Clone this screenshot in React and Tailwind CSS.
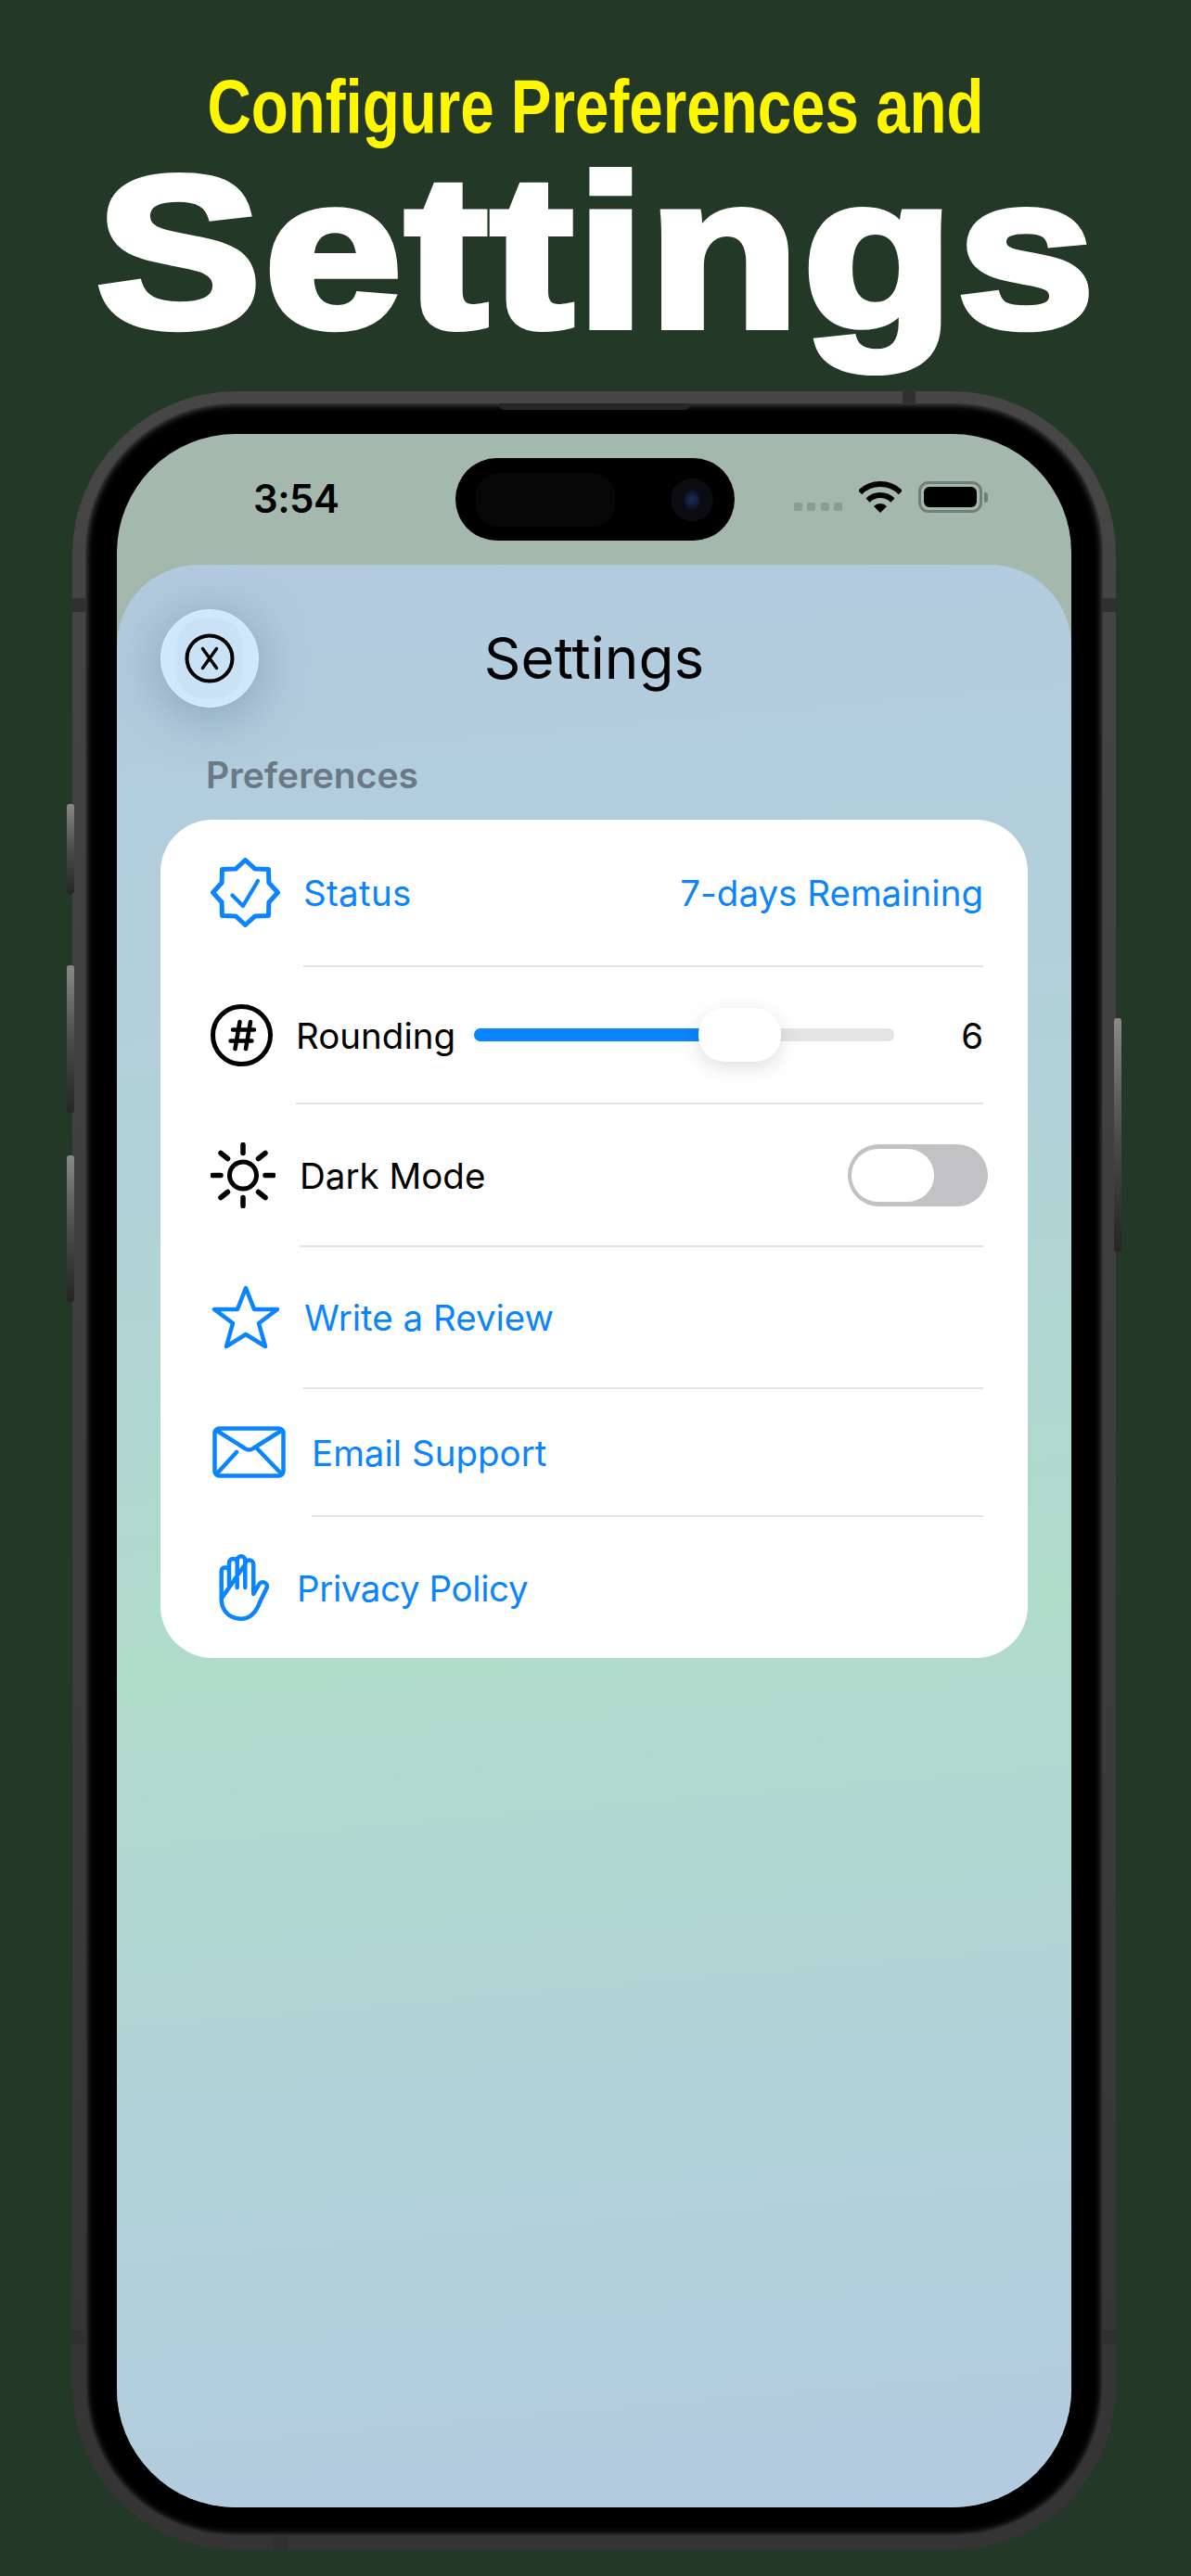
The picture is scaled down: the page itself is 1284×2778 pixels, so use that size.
import React from 'react';

const BLUE = '#0a84ff';

const SealIcon = () => (
    <svg width="75" height="75" viewBox="-37.5 -37.5 75 75" fill="none" stroke={BLUE} strokeWidth="5" strokeLinejoin="round" strokeLinecap="round">
        <polygon points="0,-35 10.5,-25.4 25,-25 25.4,-10.5 35,0 25.4,10.5 25,25 10.5,25.4 0,35 -10.5,25.4 -25,25 -25.4,10.5 -35,0 -25.4,-10.5 -25,-25 -10.5,-25.4" />
        <path d="M-14 3L-2.5 14.5L13.5 -12.5" strokeWidth="4.2" />
    </svg>
);

const HashIcon = () => (
    <svg width="67" height="67" viewBox="0 0 67 67" fill="none" stroke="#000" strokeLinecap="round">
        <circle cx="33.5" cy="33.5" r="31" strokeWidth="5" />
        <path d="M31.5 19L26.5 48M43 19L38 48M24 27.5H47M21.5 39.5H44.5" strokeWidth="4.5" />
    </svg>
);

const SunIcon = () => (
    <svg width="70" height="71" viewBox="-35 -35.5 70 71" fill="none" stroke="#000" strokeLinecap="round">
        <circle cx="0" cy="0" r="14.5" strokeWidth="5" />
        <path d="M0 -33V-24M0 33V24M-33 0H-24M33 0H24M-24 -24L-16.5 -18M24 -24L16.5 -18M-24 24L-16.5 18M24 24L16.5 18" strokeWidth="5.5" />
    </svg>
);

const StarIcon = () => (
    <svg width="74" height="70" viewBox="0 0 74 70" fill="none" stroke={BLUE} strokeWidth="4.5" strokeLinejoin="round">
        <polygon points="37,3 46,26 71,26 51,41 58,66 37,53 16,66 23,41 3,26 28,26" />
    </svg>
);

const MailIcon = () => (
    <svg width="79" height="56" viewBox="0 0 79 56" fill="none" stroke={BLUE} strokeWidth="4.5" strokeLinecap="round">
        <rect x="2.5" y="2.5" width="74" height="51" rx="5" />
        <path d="M5 5L35 24Q39.5 27 44 24L74 5M5 51L26 28M49 25L74 51" />
    </svg>
);

const HandIcon = () => (
    <svg width="54" height="72" viewBox="0 0 54 72" fill="none" stroke={BLUE} strokeWidth="4.5" strokeLinecap="round" strokeLinejoin="round">
        <path d="M2.7 48V18A4.2 4.2 0 0 1 11 18V36M11 18V9.4A4.35 4.35 0 0 1 19.7 9.4V36M19.7 9.4V6.6A4.3 4.3 0 0 1 28.3 6.6V36M28.3 11A4.5 4.5 0 0 1 37.3 11V43L43 33A4.5 4.5 0 0 1 51.5 36.5L44 52C40 63 33 69.7 24 69.7C10 69.7 2.7 60 2.7 48Z" />
    </svg>
);

const CloseIcon = () => (
    <svg width="54" height="54" viewBox="0 0 54 54" fill="none" stroke="#000" strokeLinecap="round">
        <circle cx="27" cy="27" r="24.5" strokeWidth="4" />
        <path d="M19.5 16.5L34.5 37.5M34.5 16.5L19.5 37.5" strokeWidth="3.5" />
    </svg>
);

const WifiIcon = () => (
    <svg width="46" height="34" viewBox="0 0 46 34" fill="none" stroke="#000">
        <path d="M1.1 12.1A31 31 0 0 1 44.9 12.1" strokeWidth="6" />
        <path d="M9.6 20.6A19 19 0 0 1 36.4 20.6" strokeWidth="6" />
        <path d="M23 34L15.9 26.9A10 10 0 0 1 30.1 26.9Z" fill="#000" stroke="none" />
    </svg>
);

const Divider = ({ className }) => <div className={`h-[2px] bg-[#e5e5e7] mr-[48px] ${className}`} />;

// metal band cuts on the phone edge
const Band = ({ className }) => <div className={`absolute bg-[#303030] ${className}`} />;

const SideButton = ({ className }) => (
    <div className={`absolute w-[8px] rounded-[3px] bg-gradient-to-b from-[#8a8a8a] via-[#4c4c4c] to-[#252525] ${className}`} />
);

export default function App() {
    return (
        <div className="w-[1284px] h-[2778px] bg-[#243827] flex flex-col items-center overflow-hidden font-['Inter',sans-serif]">
            {/* Headline */}
            <div className="h-[422px] w-full flex flex-col items-center font-['Liberation_Sans',Arial,sans-serif] font-bold shrink-0">
                <div className="mt-[75px] h-[80px] leading-[80px] text-[65.5px] text-[#fff700] scale-y-[1.25] whitespace-nowrap">Configure Preferences and</div>
                <div className="mt-[-3px] ml-[3px] h-[240px] leading-[240px] text-[232px] text-white scale-x-[1.15] tracking-[3px] [-webkit-text-stroke:8px_#ffffff] whitespace-nowrap">Settings</div>
            </div>

            {/* Phone */}
            <div className="relative mr-[3px] w-[1125px] h-[2328px] shrink-0 rounded-[176px] bg-gradient-to-b from-[#464646] to-[#343434] pt-[13px] pb-[15px] px-[14px]">
                <SideButton className="left-[-6px] top-[445px] h-[97px]" />
                <SideButton className="left-[-6px] top-[619px] h-[159px]" />
                <SideButton className="left-[-6px] top-[824px] h-[158px]" />
                <SideButton className="right-[-6px] top-[676px] h-[252px]" />
                <Band className="left-0 top-[223px] w-[14px] h-[15px]" />
                <Band className="right-0 top-[223px] w-[14px] h-[15px]" />
                <Band className="left-0 top-[2091px] w-[14px] h-[15px]" />
                <Band className="right-0 top-[2091px] w-[14px] h-[15px]" />
                <Band className="left-[895px] top-0 w-[14px] h-[13px]" />
                <Band className="left-[217px] bottom-0 w-[15px] h-[15px]" />
                <div className="absolute left-[460px] top-[13px] w-[206px] h-[7px] bg-[#262626] rounded-b-[6px] z-10" />

                <div className="w-full h-full rounded-[160px] bg-black pt-[33px] pb-[31px] px-[34px] shadow-[inset_0_0_9px_rgba(255,255,255,0.45)]">
                    <div className="w-full h-full rounded-[128px] bg-[#a5b8ae] overflow-hidden flex flex-col">
                        {/* Status bar */}
                        <div className="h-[141px] shrink-0 relative flex items-start pl-[147px] pr-[90px]">
                            <span className="mt-[47px] text-[42px] leading-[46px] font-semibold text-black w-[94px] tracking-[-0.5px] whitespace-nowrap">3:54</span>
                            <div className="mt-[26px] ml-[124px] w-[301px] h-[89px] rounded-full bg-black relative flex items-center">
                                <div className="ml-[22px] w-[150px] h-[58px] rounded-[24px] bg-[#070708]" />
                                <div className="absolute left-[232px] top-[22px] w-[46px] h-[46px] rounded-full bg-[#0b0b12] flex items-center justify-center">
                                    <div className="w-[16px] h-[22px] rounded-full bg-[radial-gradient(circle,#1b2f63_0%,#10182f_55%,#0a0a10_100%)]" />
                                </div>
                            </div>
                            <div className="ml-auto flex items-start">
                                <div className="mt-[74px] flex gap-[5.5px]">
                                    <div className="w-[9px] h-[9px] rounded-[2px] bg-[#8a9d93]" />
                                    <div className="w-[9px] h-[9px] rounded-[2px] bg-[#8a9d93]" />
                                    <div className="w-[9px] h-[9px] rounded-[2px] bg-[#8a9d93]" />
                                    <div className="w-[9px] h-[9px] rounded-[2px] bg-[#8a9d93]" />
                                </div>
                                <div className="mt-[51px] ml-[18px]"><WifiIcon /></div>
                                <div className="mt-[51px] ml-[18px] flex items-center">
                                    <div className="w-[69px] h-[34px] rounded-[11px] border-[3px] border-[#6f8078] p-[3px]">
                                        <div className="w-full h-full rounded-[6px] bg-black" />
                                    </div>
                                    <div className="ml-[2px] w-[4px] h-[11px] rounded-r-[3px] bg-[#6f8078]" />
                                </div>
                            </div>
                        </div>

                        {/* Sheet */}
                        <div className="flex-1 rounded-t-[88px] bg-[linear-gradient(175deg,#b3cadf_0%,#b1d2d8_30%,#b0dccb_55%,#b1d3d8_77%,#b3cae0_100%)] px-[47px] pt-[48px]">
                            <div className="grid grid-cols-[106px_1fr_106px] items-center h-[106px]">
                                <div className="w-[106px] h-[106px] rounded-full bg-[#cfe8fc] border border-[#dff2ff] shadow-[0_8px_60px_rgba(60,90,120,0.4)] flex items-center justify-center">
                                    <div className="w-[72px] h-[86px] rounded-[30px] bg-[#c9e2f6] flex items-center justify-center shrink-0">
                                        <div className="shrink-0"><CloseIcon /></div>
                                    </div>
                                </div>
                                <h1 className="text-center text-[62px] leading-[72px] font-normal text-black">Settings</h1>
                                <div />
                            </div>

                            <div className="mt-[49px] ml-[49px] h-[48px] leading-[48px] text-[39px] font-semibold text-[#6b7885]">Preferences</div>

                            <div className="mt-[24px] h-[904px] rounded-[56px] bg-white pl-[54px] text-[38.5px]">
                                <div className="h-[157px] flex items-center pr-[48px]">
                                    <SealIcon />
                                    <span className="ml-[25px] pt-[3px] tracking-[0.3px] text-[#0a84ff]">Status</span>
                                    <span className="ml-auto pt-[3px] text-[#0a84ff]">7-days Remaining</span>
                                </div>
                                <Divider className="ml-[100px]" />
                                <div className="h-[146px] flex items-center pr-[48px]">
                                    <HashIcon />
                                    <span className="ml-[25px] pt-[3px] text-black">Rounding</span>
                                    <div className="ml-auto relative w-[453px] h-[14px] rounded-full bg-[#e4e4e6]">
                                        <div className="w-[250px] h-full rounded-l-full bg-[#0a84ff]" />
                                        <div className="absolute left-[242px] top-[-22px] w-[89px] h-[58px] rounded-[28px] bg-white shadow-[0_6px_22px_rgba(0,0,0,0.13)]" />
                                    </div>
                                    <span className="w-[96px] pt-[3px] text-right text-black">6</span>
                                </div>
                                <Divider className="ml-[92px]" />
                                <div className="h-[152px] flex items-center pr-[43px]">
                                    <SunIcon />
                                    <span className="ml-[26px] pt-[3px] text-black">Dark Mode</span>
                                    <div className="ml-auto w-[151px] h-[67px] rounded-full bg-[#c2c2c4] flex items-center pl-[4px]">
                                        <div className="w-[89px] h-[57px] rounded-full bg-white" />
                                    </div>
                                </div>
                                <Divider className="ml-[96px]" />
                                <div className="h-[151px] flex items-center pr-[48px]">
                                    <div className="ml-[1px]"><StarIcon /></div>
                                    <span className="ml-[26px] pt-[3px] text-[#0a84ff]">Write a Review</span>
                                </div>
                                <Divider className="ml-[100px]" />
                                <div className="h-[136px] flex items-center pr-[48px]">
                                    <div className="ml-[2px]"><MailIcon /></div>
                                    <span className="ml-[28px] pt-[3px] text-[#0a84ff]">Email Support</span>
                                </div>
                                <Divider className="ml-[109px]" />
                                <div className="h-[152px] flex items-center pr-[48px]">
                                    <div className="ml-[9px]"><HandIcon /></div>
                                    <span className="ml-[30px] pt-[3px] tracking-[-0.4px] text-[#0a84ff]">Privacy Policy</span>
                                </div>
                            </div>
                        </div>
                    </div>
                </div>
            </div>
        </div>
    );
}
